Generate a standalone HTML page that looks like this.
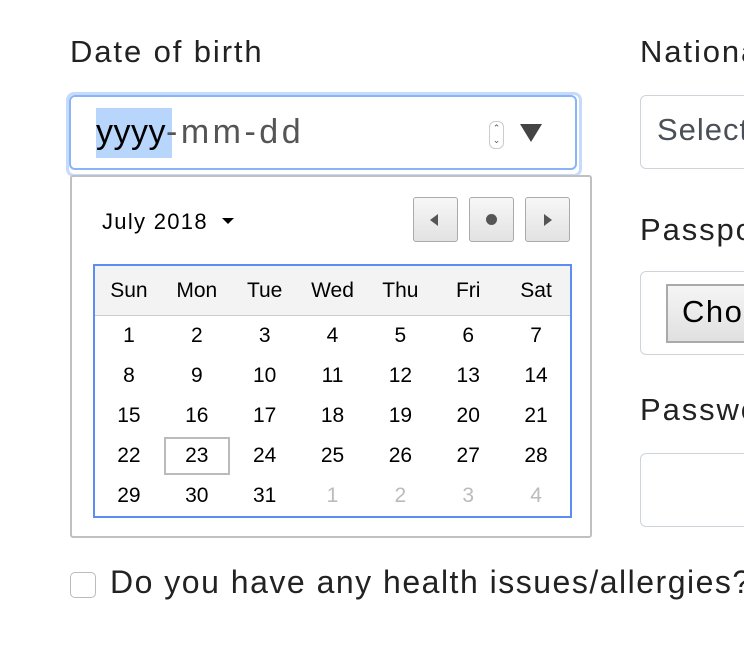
<!DOCTYPE html>
<html><head><style>
body{margin:0;width:744px;height:650px;overflow:hidden;background:#fff;font-family:"Liberation Sans",sans-serif;position:relative;color:#212529}
.a{position:absolute}
.lbl{font-size:31px;color:#222;white-space:nowrap;letter-spacing:1.9px}
.box{border:1px solid #ced4da;border-radius:6px;background:#fff}
.cal td,.cal th{width:68px;text-align:center;font-size:21px;color:#000;font-weight:normal;padding:0;height:40px}
.cal th{height:49px;background:#f3f3f3;border-bottom:1px solid #ccc}
.g{color:#bbb!important}
.btn{position:absolute;top:197px;width:45px;height:45px;border:1px solid #aaa;border-radius:3px;background:linear-gradient(#f7f7f7,#e2e2e2);box-sizing:border-box}
#clip{position:absolute;left:0;top:0;width:744px;height:650px;overflow:hidden}
</style></head><body><div id="clip">
<div class="a lbl" style="left:70px;top:34px">Date of birth</div>
<div class="a" style="left:66px;top:92px;width:510px;height:79px;border:3px solid #c6dbfb;border-radius:8px"></div>
<div class="a" style="left:69px;top:95px;width:508px;height:75px;border:2px solid #8ab4f8;border-radius:6px;box-sizing:border-box"></div>
<div class="a" style="left:96px;top:108px;width:76px;height:50px;background:#b8d6fb"></div>
<div class="a" style="left:96px;top:113px;font-size:34px;color:#555;white-space:nowrap;letter-spacing:3.5px"><span style="color:#000;letter-spacing:0.5px">yyyy</span>-mm-dd</div>
<div class="a" style="left:489px;top:121px;width:13px;height:26px;border:1px solid #ccc;border-radius:6px;font-size:9px;line-height:12px;text-align:center;color:#555">⌃<br>⌄</div>
<div class="a" style="left:520px;top:124px;width:0;height:0;border-left:11px solid transparent;border-right:11px solid transparent;border-top:18px solid #444"></div>
<div class="a" style="left:70px;top:175px;width:522px;height:363px;border:2px solid #c0c0c0;border-radius:3px;box-sizing:border-box;background:#fff"></div>
<div class="a" style="left:102px;top:209px;font-size:22px;color:#000;letter-spacing:1.3px">July 2018</div>
<div class="a" style="left:222px;top:218px;border-left:6px solid transparent;border-right:6px solid transparent;border-top:6px solid #000"></div>
<div class="btn" style="left:413px"><div class="a" style="left:16px;top:16px;border-top:6px solid transparent;border-bottom:6px solid transparent;border-right:8px solid #555"></div></div>
<div class="btn" style="left:469px"><div class="a" style="left:16px;top:16px;width:11px;height:11px;border-radius:50%;background:#555"></div></div>
<div class="btn" style="left:525px"><div class="a" style="left:18px;top:16px;border-top:6px solid transparent;border-bottom:6px solid transparent;border-left:8px solid #555"></div></div>
<table class="a cal" style="left:93px;top:264px;width:479px;border:2px solid #5b8ef0;border-collapse:collapse;border-spacing:0">
<tr><th>Sun</th><th>Mon</th><th>Tue</th><th>Wed</th><th>Thu</th><th>Fri</th><th>Sat</th></tr>
<tr><td>1</td><td>2</td><td>3</td><td>4</td><td>5</td><td>6</td><td>7</td></tr>
<tr><td>8</td><td>9</td><td>10</td><td>11</td><td>12</td><td>13</td><td>14</td></tr>
<tr><td>15</td><td>16</td><td>17</td><td>18</td><td>19</td><td>20</td><td>21</td></tr>
<tr><td>22</td><td style="outline:2px solid #bbb;outline-offset:-3px">23</td><td>24</td><td>25</td><td>26</td><td>27</td><td>28</td></tr>
<tr><td>29</td><td>30</td><td>31</td><td class="g">1</td><td class="g">2</td><td class="g">3</td><td class="g">4</td></tr>
</table>
<div class="a lbl" style="left:640px;top:34px">Nationality</div>
<div class="a box" style="left:640px;top:95px;width:140px;height:72px"></div>
<div class="a" style="left:657px;top:112px;font-size:31px;color:#495057;letter-spacing:1px">Select</div>
<div class="a lbl" style="left:640px;top:212px">Passport</div>
<div class="a box" style="left:640px;top:271px;width:140px;height:82px"></div>
<div class="a" style="left:666px;top:284px;width:100px;height:55px;border:2px solid #aaa;background:linear-gradient(#f5f5f5,#e0e0e0)"></div>
<div class="a" style="left:682px;top:294px;font-size:31px;color:#000;letter-spacing:1.5px">Choose</div>
<div class="a lbl" style="left:640px;top:392px">Password</div>
<div class="a box" style="left:640px;top:453px;width:140px;height:72px"></div>
<div class="a" style="left:70px;top:572px;width:26px;height:26px;border:1px solid #bbb;border-radius:5px;box-sizing:border-box"></div>
<div class="a" style="left:110px;top:564px;font-size:32px;color:#222;white-space:nowrap;letter-spacing:1.5px">Do you have any health issues/allergies?</div>
</div></body></html>
